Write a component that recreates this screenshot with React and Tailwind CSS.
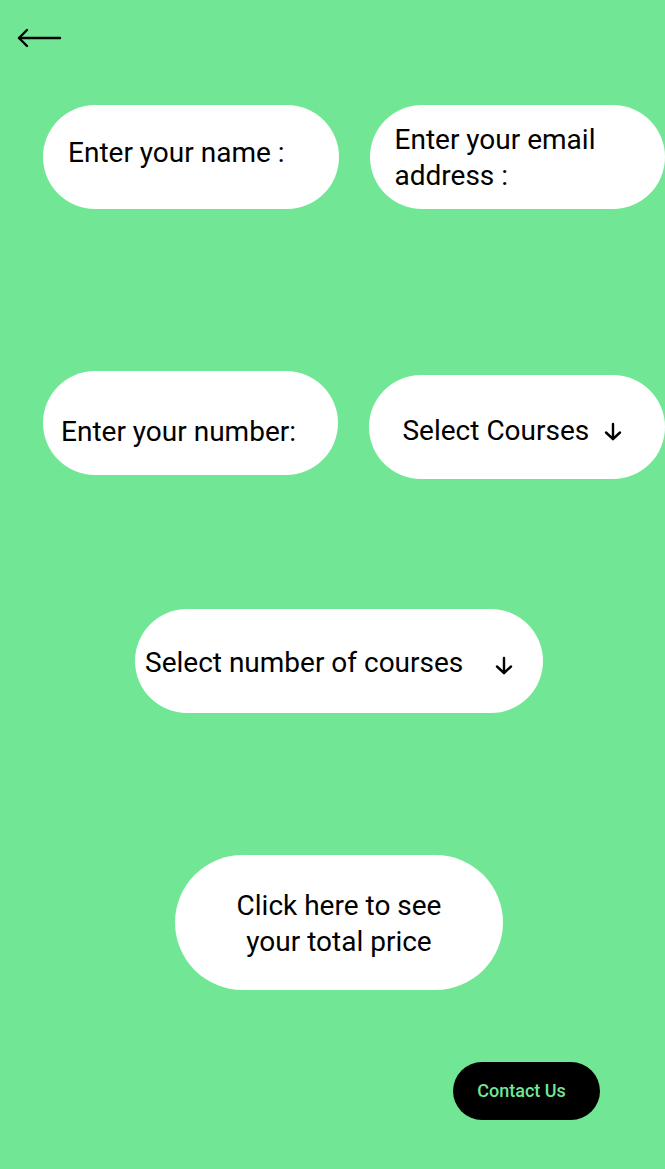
import React from 'react'

const font = { fontFamily: 'Roboto, "Liberation Sans", sans-serif' }

function BackArrow() {
  return (
    <svg width="46" height="22" viewBox="0 0 46 22" fill="none" stroke="black" strokeWidth="2.4" strokeLinecap="round" strokeLinejoin="round">
      <path d="M3 11H44" />
      <path d="M11 3L3 11L11 19" />
    </svg>
  )
}

function DownArrow() {
  return (
    <svg width="20" height="20" viewBox="0 0 20 20" fill="none" stroke="black" strokeWidth="2.4" strokeLinecap="round" strokeLinejoin="round">
      <path d="M10 2V17" />
      <path d="M3 10.5L10 17L17 10.5" />
    </svg>
  )
}

export default function App() {
  return (
    <div className="min-h-[1169px] w-[665px] bg-[#71e795] text-black overflow-hidden" style={font}>
      {/* header */}
      <div className="pl-[16px] pt-[27px] h-[105px]">
        <BackArrow />
      </div>

      {/* row 1 */}
      <div className="flex items-start gap-[31px] pl-[43px]">
        <div className="w-[296px] h-[104px] rounded-full bg-white flex items-center pl-[25px] pb-[8px] text-[28px]">
          Enter your name :
        </div>
        <div className="w-[296px] h-[104px] rounded-full bg-white flex items-center pl-[25px] pt-[2px] text-[28px] leading-[36px]">
          Enter your email
          <br />
          address :
        </div>
      </div>

      {/* row 2 */}
      <div className="flex items-start gap-[31px] pl-[43px] mt-[162px]">
        <div className="w-[296px] h-[104px] rounded-full bg-white flex items-center pl-[18px] pt-[17px] text-[28px]">
          Enter your number:
        </div>
        <div className="mt-[4px] w-[296px] h-[104px] rounded-full bg-white flex items-center pl-[33px] pt-[8px] text-[28px]">
          <span>Select Courses</span>
          <span className="ml-[14px] mt-[2px]"><DownArrow /></span>
        </div>
      </div>

      {/* row 3 */}
      <div className="flex justify-start pl-[135px] mt-[130px]">
        <div className="w-[408px] h-[104px] rounded-full bg-white flex items-center pl-[10px] pt-[4px] text-[28px]">
          <span>Select number of courses</span>
          <span className="ml-[31px] mt-[6px]"><DownArrow /></span>
        </div>
      </div>

      {/* total price */}
      <div className="flex pl-[175px] mt-[142px]">
        <div className="w-[328px] h-[135px] rounded-full bg-white flex items-center justify-center text-center text-[28px] leading-[36px] pt-[2px]">
          Click here to see
          <br />
          your total price
        </div>
      </div>

      {/* contact */}
      <div className="flex pl-[453px] mt-[72px]">
        <button className="w-[147px] h-[58px] rounded-full bg-black text-[#71e795] text-[18px] font-medium flex items-center justify-center pr-[10px] pb-[2px]">
          Contact Us
        </button>
      </div>
    </div>
  )
}
